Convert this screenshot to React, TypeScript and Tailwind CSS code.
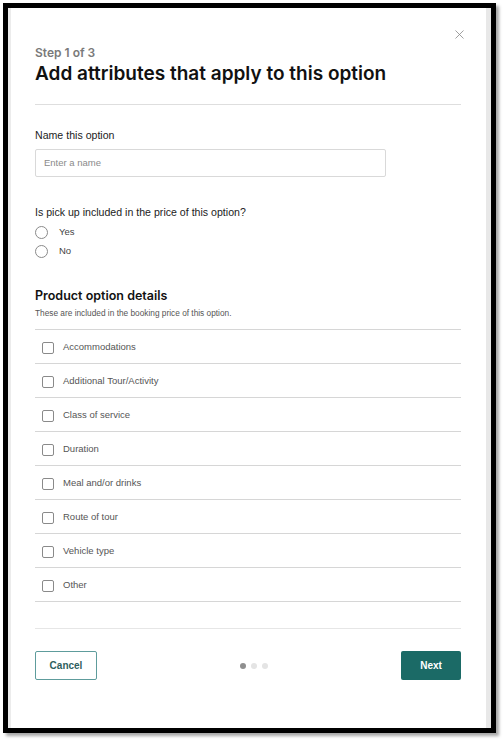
import { X } from "lucide-react";

const details = [
  "Accommodations",
  "Additional Tour/Activity",
  "Class of service",
  "Duration",
  "Meal and/or drinks",
  "Route of tour",
  "Vehicle type",
  "Other",
];

export default function App() {
  return (
    <div className="w-[503px] h-[740px] bg-white pt-[3px] pl-[3px] font-['Liberation_Sans',Arial,sans-serif]">
      <div className="w-[493px] h-[730px] border-[5px] border-black flex shadow-[3px_3px_3px_rgba(0,0,0,0.35)]">
        <div className="w-[3px] bg-[#ececec]" />
        <div className="flex-1 flex flex-col pt-[20px] pl-[24px] pr-[25px]">
          {/* Header */}
          <div className="flex justify-end -mr-[6px]">
            <X className="w-[15px] h-[15px] text-[#8a8a8a] -my-[1px]" strokeWidth={1.3} />
          </div>
          <div className="mt-[4px] text-[12px] leading-[16px] font-semibold text-[#7a7a7a] font-['Inter',sans-serif]">
            Step 1 of 3
          </div>
          <h1 className="text-[19px] leading-[26px] font-semibold text-[#111] font-['Inter',sans-serif]">
            Add attributes that apply to this option
          </h1>
          <div className="mt-[17px] border-t border-[#dedede]" />

          {/* Name */}
          <label className="mt-[22px] text-[10.6px] leading-[16px] text-[#222]">Name this option</label>
          <div className="mt-[6px] w-[351px] h-[28px] border border-[#d9d9d9] rounded-[2px] flex items-center px-[8px] text-[9.5px] text-[#8a8a8a]">
            Enter a name
          </div>

          {/* Pick up */}
          <div className="mt-[27px] text-[10.6px] leading-[16px] text-[#222]">
            Is pick up included in the price of this option?
          </div>
          <div className="mt-[4px] flex flex-col gap-[3px]">
            {["Yes", "No"].map((o) => (
              <div key={o} className="flex items-center h-[16px]">
                <span className="w-[13px] h-[13px] rounded-full border border-[#8a8a8a]" />
                <span className="ml-[11px] text-[9.5px] text-[#444]">{o}</span>
              </div>
            ))}
          </div>

          {/* Product option details */}
          <h2 className="mt-[27px] text-[12.5px] leading-[20px] font-semibold text-[#111] font-['Inter',sans-serif]">
            Product option details
          </h2>
          <p className="mt-[1px] text-[8.3px] leading-[12px] text-[#555]">
            These are included in the booking price of this option.
          </p>
          <div className="mt-[10px] border-t border-[#d6d6d6]">
            {details.map((d) => (
              <div key={d} className="h-[34px] border-b border-[#d6d6d6] flex items-center pl-[7px] pt-[2px]">
                <span className="w-[12px] h-[12px] rounded-[2px] border border-[#8a8a8a]" />
                <span className="ml-[9px] text-[9.5px] text-[#555]">{d}</span>
              </div>
            ))}
          </div>

          <div className="mt-[26px] border-t border-[#e6e6e6]" />

          {/* Footer */}
          <div className="mt-[22px] flex items-center justify-between">
            <button className="w-[62px] h-[29px] border border-[#5e9c9c] rounded-[2px] text-[10px] font-bold text-[#2e5e5e]">
              Cancel
            </button>
            <div className="flex gap-[5px] ml-[10px]">
              <span className="w-[6px] h-[6px] rounded-full bg-[#8f8f8f]" />
              <span className="w-[6px] h-[6px] rounded-full bg-[#e4e4e4]" />
              <span className="w-[6px] h-[6px] rounded-full bg-[#e4e4e4]" />
            </div>
            <button className="w-[60px] h-[29px] bg-[#1b6a66] rounded-[2px] text-[10px] font-bold text-white">
              Next
            </button>
          </div>
        </div>
        <div className="w-[5px] bg-[#e8e8e8]" />
      </div>
    </div>
  );
}
